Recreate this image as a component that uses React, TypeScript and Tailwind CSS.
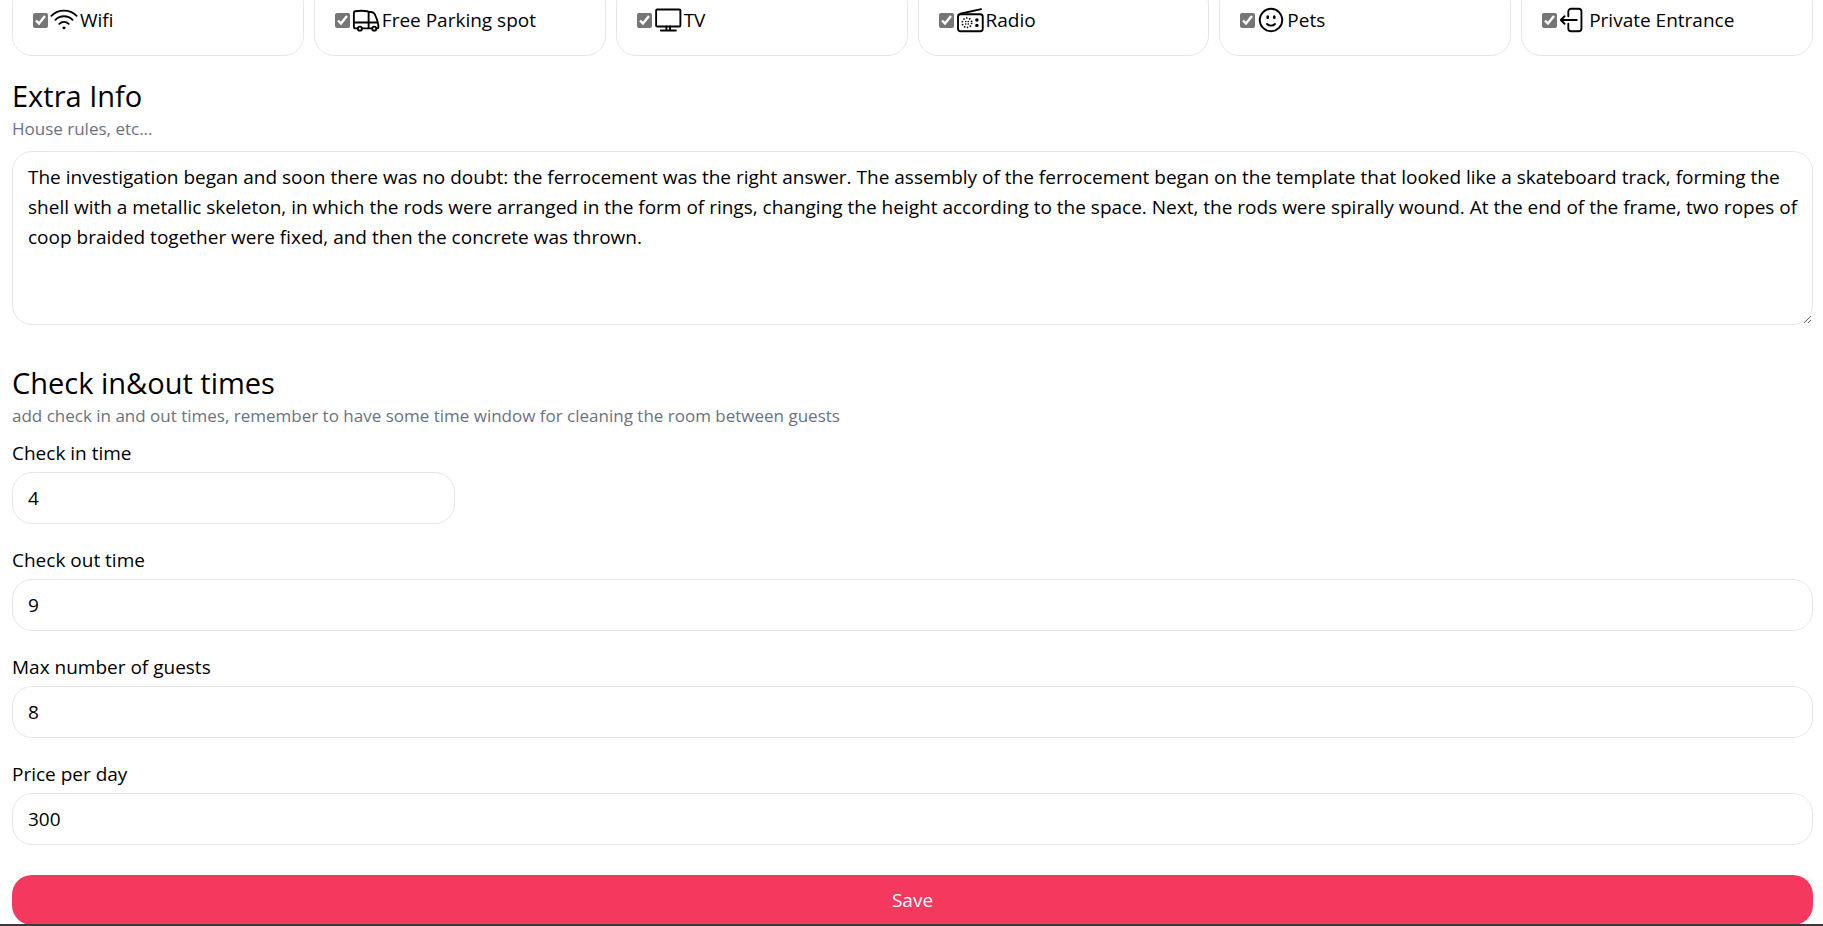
import type { ReactNode } from "react";

const stroke = {
  fill: "none",
  stroke: "currentColor",
  strokeWidth: 1.5,
  strokeLinecap: "round",
  strokeLinejoin: "round",
} as const;

function Icon({ children }: { children: ReactNode }) {
  return (
    <svg viewBox="0 0 24 24" className="size-[30px] shrink-0" aria-hidden="true" {...stroke}>
      {children}
    </svg>
  );
}

const perks: { name: string; icon: ReactNode }[] = [
  {
    name: "Wifi",
    icon: (
      <path d="M8.288 15.038a5.25 5.25 0 0 1 7.424 0M5.106 11.856c3.807-3.808 9.98-3.808 13.788 0M1.924 8.674c5.565-5.565 14.587-5.565 20.152 0M12.53 18.22l-.53.53-.53-.53a.75.75 0 0 1 1.06 0Z" />
    ),
  },
  {
    name: "Free Parking spot",
    icon: (
      <>
        <path d="M5.1 18.7H3.6a1.3 1.3 0 0 1-1.3-1.3V6.1c0-.6.4-1 1-1.1 3.2-.5 6.6-.5 9.8 0 .6.1 1 .5 1 1.1v12.6H9M14.1 5.6h2.1c1.2 0 2.2.6 2.8 1.7 1.4 2.8 2.5 5.9 2.9 9.1v1.3c0 .6-.5 1-1.2 1M14.1 18.7h2.6M2.3 14h11.8M14.1 14h7.2" />
        <circle cx="7.1" cy="18.9" r="1.6" />
        <circle cx="18.6" cy="18.9" r="1.6" />
      </>
    ),
  },
  {
    name: "TV",
    icon: (
      <>
        <rect x="2.5" y="3.6" width="19.4" height="13.6" rx=".8" />
        <path d="M10.7 17.2v3M13.6 17.2v3M6.3 20.4h12" />
      </>
    ),
  },
  {
    name: "Radio",
    icon: (
      <>
        <rect x="2.4" y="7.4" width="19.8" height="13.6" rx="2" />
        <path d="M4.2 7 20.9 3.3" />
        <circle cx="9.6" cy="14.2" r="3.8" strokeDasharray="1.15 1.24" strokeWidth="1.3" strokeLinecap="butt" />
        <g fill="currentColor" stroke="none">
          <circle cx="8.6" cy="13.2" r=".65" />
          <circle cx="10.6" cy="13.2" r=".65" />
          <circle cx="8.6" cy="15.2" r=".65" />
          <circle cx="10.6" cy="15.2" r=".65" />
          <circle cx="17.5" cy="12" r="1.4" />
          <circle cx="17.5" cy="16.3" r="1.4" />
        </g>
      </>
    ),
  },
  {
    name: "Pets",
    icon: (
      <path d="M15.182 15.182a4.5 4.5 0 0 1-6.364 0M21 12a9 9 0 1 1-18 0 9 9 0 0 1 18 0ZM9.75 9.75c0 .414-.168.75-.375.75S9 10.164 9 9.75 9.168 9 9.375 9s.375.336.375.75Zm-.375 0h.008v.015h-.008V9.75Zm5.625 0c0 .414-.168.75-.375.75s-.375-.336-.375-.75.168-.75.375-.75.375.336.375.75Zm-.375 0h.008v.015h-.008V9.75Z" />
    ),
  },
  {
    name: "Private Entrance",
    icon: (
      <path d="M8.25 9V5.25A2.25 2.25 0 0 1 10.5 3h6a2.25 2.25 0 0 1 2.25 2.25v13.5A2.25 2.25 0 0 1 16.5 21h-6a2.25 2.25 0 0 1-2.25-2.25V15m-3 0-3-3m0 0 3-3m-3 3H15" />
    ),
  },
];

function SectionHeader({ title, note, id }: { title: string; note: string; id?: string }) {
  return (
    <header>
      <h2 id={id} className="text-[29px] leading-10">{title}</h2>
      <p className="text-[17px] leading-[25px] text-gray-500">{note}</p>
    </header>
  );
}

function Field({ id, label, value }: { id: string; label: string; value: string }) {
  return (
    <div className="flex flex-col gap-1">
      <label htmlFor={id} className="leading-[30px]">{label}</label>
      <input
        id={id}
        type="text"
        defaultValue={value}
        className="w-full rounded-[20px] border border-gray-200 px-[15px] py-2.5 leading-[30px]"
      />
    </div>
  );
}

const extraInfo =
  "The investigation began and soon there was no doubt: the ferrocement was the right answer. The assembly of the ferrocement began on the template that looked like a skateboard track, forming the shell with a metallic skeleton, in which the rods were arranged in the form of rings, changing the height according to the space. Next, the rods were spirally wound. At the end of the frame, two ropes of coop braided together were fixed, and then the concrete was thrown.";

export default function App() {
  return (
    <>
      <form
        className="flex flex-col overflow-hidden bg-white pr-2.5 pl-3 font-['Open_Sans','Noto_Sans',sans-serif] text-[19px] text-black"
        onSubmit={(event) => event.preventDefault()}
      >
        <div className="-mt-4 grid grid-cols-6 gap-2.5">
          {perks.map((perk) => (
            <label
              key={perk.name}
              className="flex items-center gap-px rounded-[20px] border border-gray-200 p-5 leading-[30px]"
            >
              <input type="checkbox" defaultChecked className="size-[15px] shrink-0 accent-[#767676]" />
              <Icon>{perk.icon}</Icon>
              <span className="whitespace-nowrap">{perk.name}</span>
            </label>
          ))}
        </div>

        <section className="mt-5 flex flex-col gap-2.5">
          <SectionHeader id="extra-info" title="Extra Info" note="House rules, etc..." />
          <textarea
            aria-labelledby="extra-info"
            defaultValue={extraInfo}
            className="block h-[174px] w-full rounded-[20px] border border-gray-200 py-2.5 pr-1 pl-[15px] leading-[30px]"
          />
        </section>

        <section className="mt-[38px] flex flex-col gap-2.5">
          <SectionHeader
            title="Check in&out times"
            note="add check in and out times, remember to have some time window for cleaning the room between guests"
          />
          <div className="flex flex-col gap-[21px]">
            <div className="grid grid-cols-4 gap-2.5">
              <Field id="check-in" label="Check in time" value="4" />
            </div>
            <Field id="check-out" label="Check out time" value="9" />
            <Field id="max-guests" label="Max number of guests" value="8" />
            <Field id="price" label="Price per day" value="300" />
          </div>
        </section>

        <button type="submit" className="mt-[30px] w-full rounded-[20px] bg-[#f5385d] py-2.5 leading-[30px] text-white">
          Save
        </button>
      </form>
      <div className="fixed inset-x-0 bottom-0 h-0.5 bg-[#3a3a3a]" />
    </>
  );
}
